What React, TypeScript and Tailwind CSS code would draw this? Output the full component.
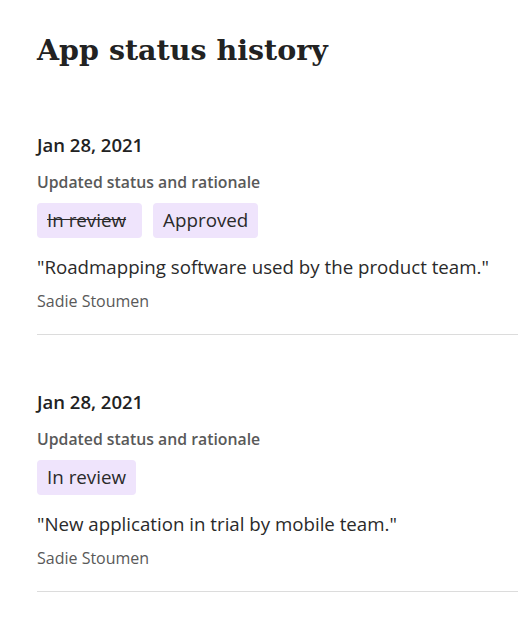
const entries = [
  {
    date: "Jan 28, 2021",
    from: "In review",
    to: "Approved",
    note: "\"Roadmapping software used by the product team.\"",
    author: "Sadie Stoumen",
  },
  {
    date: "Jan 28, 2021",
    from: null,
    to: "In review",
    note: "\"New application in trial by mobile team.\"",
    author: "Sadie Stoumen",
  },
];

function Badge({ children, struck }: { children: string; struck?: boolean }) {
  return (
    <span
      className={
        "inline-flex h-[35px] items-center rounded-[4px] bg-[#efe4fc] pl-[10px] text-[18.8px] text-[#2a2a2a] " +
        (struck ? "pr-[16px] line-through decoration-[#2a2a2a]" : "pr-[10px]")
      }
    >
      {children}
    </span>
  );
}

export default function App() {
  return (
    <main className="min-h-screen bg-white pl-[37px] pr-[6px] pt-[30px] font-['Open_Sans',sans-serif]">
      <h1 className="font-['DejaVu_Serif',serif] text-[28.5px] font-bold leading-[40px] text-[#222]">
        App status history
      </h1>
      <div className="mt-[62px] flex flex-col">
        {entries.map((e, i) => (
          <section key={i} className="border-b border-[#dcdcdc] pb-[22px] [&+section]:pt-[54px]">
            <div className="text-[18.5px] font-semibold leading-[26px] text-[#222]">{e.date}</div>
            <div className="mt-[13px] text-[15.8px] font-semibold leading-[22px] text-[#595959]">
              Updated status and rationale
            </div>
            <div className="mt-[10px] flex gap-[11px]">
              {e.from && <Badge struck>{e.from}</Badge>}
              <Badge>{e.to}</Badge>
            </div>
            <p className="mt-[15px] text-[18.7px] leading-[28px] text-[#2a2a2a]">{e.note}</p>
            <div className="mt-[9px] text-[16px] leading-[22px] text-[#595959]">{e.author}</div>
          </section>
        ))}
      </div>
    </main>
  );
}
